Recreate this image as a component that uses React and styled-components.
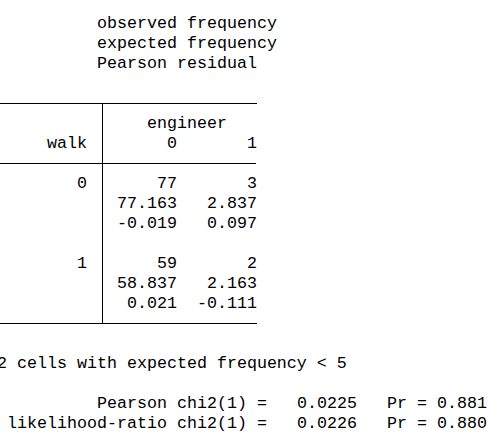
import styled, { createGlobalStyle } from 'styled-components'

const GlobalStyle = createGlobalStyle`
  html, body {
    margin: 0;
    background: #fff;
  }
`

const Output = styled.div`
  margin-left: -3px;
  padding-top: 14px;
  font-family: 'Courier New', 'Liberation Mono', monospace;
  font-size: 16.6667px;
  line-height: 20px;
  color: #000;
  white-space: pre;
`

const Key = styled.div`
  padding-left: 100px;
`

const Line = styled.div`
  height: 20px;
`

const Table = styled.div`
  display: grid;
  grid-template-columns: 105px 154px;
  width: 260px;
  margin-top: 29px;
  border-top: 1px solid #000;
  border-bottom: 1px solid #000;
`

const Stub = styled.div`
  padding: 10px 0 9px;
`

const Body = styled.div`
  padding: 10px 0 9px;
  border-left: 1px solid #000;
`

const Label = styled.div`
  height: 20px;
  padding-right: 15px;
  text-align: right;
`

const Rule = styled.div`
  height: 20px;
  position: relative;

  &::after {
    content: '';
    position: absolute;
    left: 0;
    right: 0;
    top: 9px;
    border-top: 1px solid #000;
  }
`

const Title = styled.div`
  height: 20px;
  padding-left: 44px;
`

const Row = styled.div`
  display: grid;
  grid-template-columns: 74px 80px;
  height: 20px;
  text-align: right;
`

const Note = styled.div`
  margin-top: 30px;
  height: 20px;
`

const Stats = styled.div`
  margin-top: 20px;
`

const Stat = styled.div`
  display: grid;
  grid-template-columns: 270px 90px 130px;
  height: 20px;
  text-align: right;
`

const cells = [
  { label: '0', values: [['77', '3'], ['77.163', '2.837'], ['-0.019', '0.097']] },
  { label: '1', values: [['59', '2'], ['58.837', '2.163'], ['0.021', '-0.111']] },
]

const stats = [
  ['Pearson chi2(1) =', '0.0225', 'Pr = 0.881'],
  ['likelihood-ratio chi2(1) =', '0.0226', 'Pr = 0.880'],
]

function App() {
  return (
    <Output>
      <GlobalStyle />
      <Key>
        <Line>observed frequency</Line>
        <Line>expected frequency</Line>
        <Line>Pearson residual</Line>
      </Key>

      <Table>
        <Stub>
          <Label />
          <Label>walk</Label>
          <Rule />
          {cells.map((group, i) => (
            <div key={group.label}>
              {i > 0 && <Label />}
              <Label>{group.label}</Label>
              <Label />
              <Label />
            </div>
          ))}
        </Stub>
        <Body>
          <Title>engineer</Title>
          <Row><span>0</span><span>1</span></Row>
          <Rule />
          {cells.map((group, i) => (
            <div key={group.label}>
              {i > 0 && <Line />}
              {group.values.map(([a, b]) => (
                <Row key={a}><span>{a}</span><span>{b}</span></Row>
              ))}
            </div>
          ))}
        </Body>
      </Table>

      <Note>2 cells with expected frequency &lt; 5</Note>

      <Stats>
        {stats.map(([label, value, pr]) => (
          <Stat key={label}>
            <span>{label}</span>
            <span>{value}</span>
            <span>{pr}</span>
          </Stat>
        ))}
      </Stats>
    </Output>
  )
}

export default App
